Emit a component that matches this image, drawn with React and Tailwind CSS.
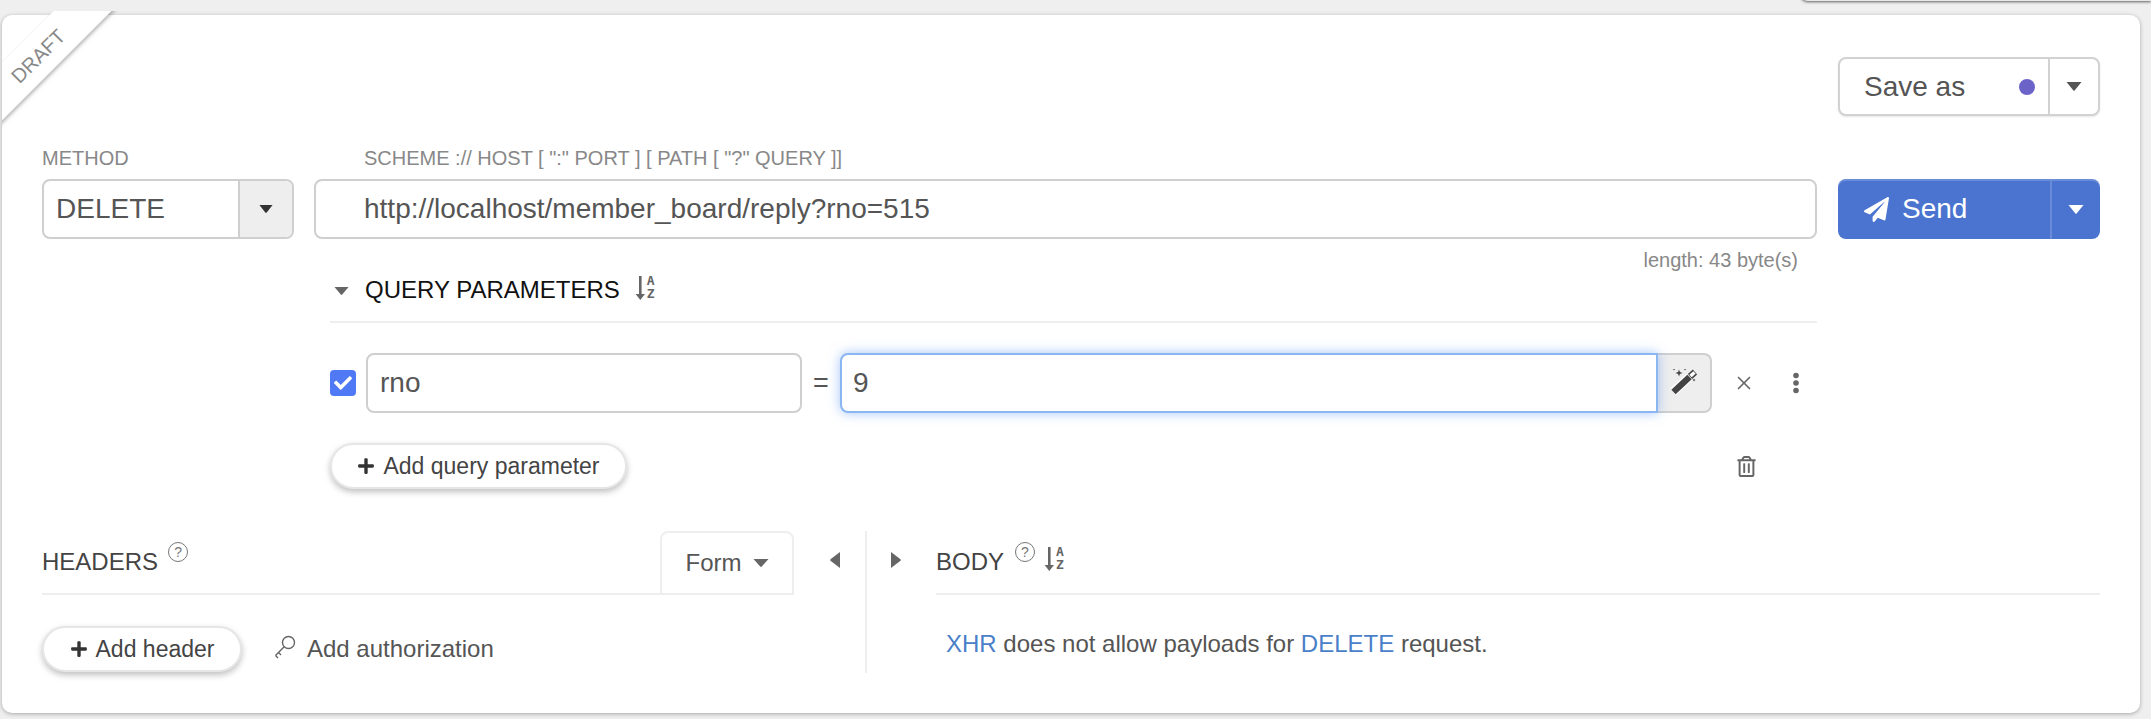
import React from "react";
import { FaPaperPlane, FaPlus, FaCheck, FaRegTrashAlt } from "react-icons/fa";
import { X } from "lucide-react";

const Caret = ({ cls = "" , color = "#555", w = 16, h = 9 }) => (
  <svg width={w} height={h} viewBox="0 0 16 9" preserveAspectRatio="none" className={cls}>
    <path d="M0.5 0 L15.5 0 L8.6 8.6 Q8 9 7.4 8.6 Z" fill={color} />
  </svg>
);

const SortAZ = () => (
  <span className="flex h-[26px] w-[24px] shrink-0 items-start gap-[1px]">
    <svg width="11" height="26" viewBox="0 0 11 26" className="shrink-0">
      <path d="M4 1h2.6v18h3.4L5.3 25 0.6 19H4z" fill="#666" />
    </svg>
    <span className="flex flex-col gap-[1px] font-['DejaVu_Sans_Mono',monospace] text-[13px] font-bold leading-[12px] text-[#666]">
      <span>A</span>
      <span>Z</span>
    </span>
  </span>
);

const Help = () => (
  <span className="flex h-[20px] w-[20px] shrink-0 items-center justify-center rounded-full border border-[#777] text-[14px] leading-none text-[#777]">?</span>
);

const Wand = () => (
  <svg width="28" height="28" viewBox="0 3 28 28" className="shrink-0">
    <path d="M3 26 19 11" stroke="#fff" strokeWidth="9" />
    <path d="M3.5 26 19.5 11" stroke="#444" strokeWidth="6.4" />
    <path d="M20 10.5 25 6" stroke="#444" strokeWidth="6.4" />
    <path d="M20.5 10 24.5 6.4" stroke="#fff" strokeWidth="3.4" />
    <path d="M9 3.5 9.9 6.1 12.5 7 9.9 7.9 9 10.5 8.1 7.9 5.5 7 8.1 6.1Z" fill="#444" />
    <path d="M4 1.5 4.5 2.5 5.5 3 4.5 3.5 4 4.5 3.5 3.5 2.5 3 3.5 2.5Z" fill="#444" />
    <path d="M15 1.5 15.5 2.5 16.5 3 15.5 3.5 15 4.5 14.5 3.5 13.5 3 14.5 2.5Z" fill="#444" />
    <path d="M24 12.5 24.5 13.5 25.5 14 24.5 14.5 24 15.5 23.5 14.5 22.5 14 23.5 13.5Z" fill="#444" />
  </svg>
);

const PillButton = ({ label, cls }) => (
  <button className={`flex items-center justify-center gap-[8px] rounded-full border-2 border-[#e6e6e6] bg-white text-[23px] leading-none text-[#444] shadow-[0_3px_6px_rgba(0,0,0,0.25)] ${cls}`}>
    <FaPlus className="h-[18px] w-[18px] text-[#333]" />
    <span>{label}</span>
  </button>
);

export default function App() {
  return (
    <div className="relative h-[719px] w-full overflow-hidden bg-[#efefef] pl-[2px] pr-[11px] pt-[15px] font-['Liberation_Sans',Arial,sans-serif] text-[#555]">
      <div className="absolute right-0 top-[-20px] h-[21px] w-[351px] rounded-bl-[8px] bg-[#e8e8e8] shadow-[0_1px_3px_rgba(0,0,0,0.6)]" />

      <div className="relative h-[698px] rounded-[10px] bg-white px-[40px] shadow-[0_1px_4px_rgba(0,0,0,0.3)]">
        <div className="absolute left-0 top-[-4px] h-[120px] w-[120px] overflow-hidden">
          <div className="absolute left-[-45px] top-[20px] flex h-[41px] w-[170px] -rotate-45 items-center justify-center bg-white pr-[12px] text-[20px] leading-none text-[#888] shadow-[0_2px_4px_rgba(0,0,0,0.3)]">
            DRAFT
          </div>
        </div>

        <div className="flex justify-end pt-[42px]">
          <div className="flex h-[59px] w-[262px] overflow-hidden rounded-[8px] border-2 border-[#d2d2d2] bg-white shadow-[0_1px_2px_rgba(0,0,0,0.1)]">
            <div className="flex flex-1 items-center justify-between border-r-2 border-[#d2d2d2] pl-[24px] pr-[13px] text-[28px] leading-none">
              <span>Save as</span>
              <span className="h-[16px] w-[16px] rounded-full bg-[#6c63c9]" />
            </div>
            <div className="flex w-[48px] items-center justify-center">
              <Caret color="#555" />
            </div>
          </div>
        </div>

        <div className="mt-[30px] flex gap-[20px]">
          <div className="w-[252px] shrink-0">
            <div className="mb-[9px] h-[24px] text-[20px] leading-[24px] text-[#888]">METHOD</div>
            <div className="flex h-[60px] overflow-hidden rounded-[8px] border-2 border-[#cfcfcf] bg-white">
              <div className="flex flex-1 items-center border-r-2 border-[#cfcfcf] pl-[12px] text-[28px] leading-none">DELETE</div>
              <div className="flex w-[52px] items-center justify-center bg-[#eee]">
                <Caret color="#333" w={14} h={8} />
              </div>
            </div>
          </div>

          <div className="w-[1503px] shrink-0">
            <div className="mb-[9px] h-[24px] pl-[50px] text-[20px] leading-[24px] text-[#888]">
              {'SCHEME :// HOST [ ":" PORT ] [ PATH [ "?" QUERY ]]'}
            </div>
            <div className="flex h-[60px] items-center rounded-[8px] border-2 border-[#cfcfcf] bg-white pl-[48px] text-[28px] leading-none">
              http://localhost/member_board/reply?rno=515
            </div>
            <div className="mt-[9px] h-[24px] pr-[19px] text-right text-[20px] leading-[24px] text-[#888]">length: 43 byte(s)</div>

            <div className="ml-[16px]">
              <div className="flex h-[51px] items-start border-b-2 border-[#eee] pt-[3px]">
                <Caret color="#666" w={15} h={8} cls="ml-[4px] mt-[12px]" />
                <span className="ml-[16px] text-[24px] leading-[30px] text-[#111]">QUERY PARAMETERS</span>
                <span className="ml-[15px]"><SortAZ /></span>
              </div>

              <div className="mt-[30px] flex h-[60px] items-center">
                <span className="flex h-[26px] w-[26px] shrink-0 items-center justify-center rounded-[4px] bg-[#4f79f5]">
                  <FaCheck className="h-[18px] w-[18px] text-white" />
                </span>
                <div className="ml-[10px] flex h-[60px] w-[436px] items-center rounded-[8px] border-2 border-[#cfcfcf] bg-white pl-[12px] text-[28px] leading-none">rno</div>
                <span className="flex w-[38px] justify-center text-[27px] leading-none">=</span>
                <div className="relative z-10 flex h-[60px] w-[818px] items-center rounded-l-[8px] border-2 border-[#8ab6f2] bg-white pl-[11px] text-[28px] leading-none shadow-[0_0_12px_rgba(90,150,240,0.55)]">9</div>
                <div className="flex h-[60px] w-[54px] items-center justify-center rounded-r-[8px] border-2 border-l-0 border-[#cfcfcf] bg-[#eee]">
                  <Wand />
                </div>
                <X className="ml-[21px] h-[22px] w-[22px] text-[#666]" strokeWidth={1.8} />
                <svg width="8" height="22" viewBox="0 0 8 22" className="ml-[37px]">
                  <circle cx="4" cy="3.5" r="2.8" fill="#666" />
                  <circle cx="4" cy="11" r="2.8" fill="#666" />
                  <circle cx="4" cy="18.5" r="2.8" fill="#666" />
                </svg>
              </div>

              <div className="mt-[30px] flex items-center">
                <PillButton label="Add query parameter" cls="h-[46px] w-[297px]" />
                <FaRegTrashAlt className="ml-[1110px] h-[21px] w-[19px] text-[#666]" />
              </div>
            </div>
          </div>

          <div className="ml-[1px] w-[262px] shrink-0 pt-[33px]">
            <div className="flex h-[60px] overflow-hidden rounded-[8px] bg-[#4a74cf] text-white shadow-[inset_0_2px_0_rgba(255,255,255,0.18)]">
              <div className="flex flex-1 items-center gap-[13px] border-r-2 border-[#6a8cd8] pl-[26px] text-[28px] leading-none">
                <FaPaperPlane className="h-[25px] w-[25px]" />
                <span>Send</span>
              </div>
              <div className="flex w-[48px] items-center justify-center">
                <Caret color="#fff" />
              </div>
            </div>
          </div>
        </div>

        <div className="mt-[42px] flex">
          <div className="w-[752px] shrink-0">
            <div className="flex h-[64px] items-start justify-between border-b-2 border-[#eee]">
              <div className="flex items-start pt-[16px]">
                <span className="text-[24px] leading-[30px] text-[#444]">HEADERS</span>
                <span className="ml-[10px] mt-[-5px]"><Help /></span>
              </div>
              <div className="mb-[-2px] flex h-[64px] w-[134px] items-center justify-center gap-[11px] rounded-t-[8px] border-2 border-[#eee] bg-white text-[24px] leading-none">
                <span>Form</span>
                <Caret color="#666" w={16} h={8} />
              </div>
            </div>
            <div className="mt-[31px] flex items-center">
              <PillButton label="Add header" cls="h-[46px] w-[200px]" />
              <svg width="22" height="24" viewBox="0 0 22 24" className="ml-[32px] mt-[-4px]" fill="none" stroke="#666" strokeWidth="1.4">
                <circle cx="14.5" cy="7.5" r="6" />
                <path d="M10.2 11.8 1.5 20.5M1.5 20.5l2.5 2.5M4.5 17.5l2.5 2.5" />
              </svg>
              <span className="ml-[11px] text-[24px] leading-none">Add authorization</span>
            </div>
          </div>

          <div className="ml-[36px] pt-[21px]">
            <svg width="10" height="16" viewBox="0 0 10 16"><path d="M10 0v16L0.5 8.7Q0 8 0.5 7.3Z" fill="#666" /></svg>
          </div>
          <div className="ml-[25px] h-[142px] w-[2px] bg-[#eee]" />
          <div className="ml-[24px] pt-[21px]">
            <svg width="10" height="16" viewBox="0 0 10 16"><path d="M0 0v16L9.5 8.7Q10 8 9.5 7.3Z" fill="#666" /></svg>
          </div>

          <div className="ml-[35px] flex-1">
            <div className="flex h-[64px] items-start border-b-2 border-[#eee] pt-[16px]">
              <span className="text-[24px] leading-[30px] text-[#444]">BODY</span>
              <span className="ml-[11px] mt-[-5px]"><Help /></span>
              <span className="ml-[9px] mt-[-1px]"><SortAZ /></span>
            </div>
            <div className="mt-[34px] pl-[10px] text-[24px] leading-[30px]">
              <span className="text-[#4a7fc9]">XHR</span> does not allow payloads for <span className="text-[#4a7fc9]">DELETE</span> request.
            </div>
          </div>
        </div>
      </div>
    </div>
  );
}
